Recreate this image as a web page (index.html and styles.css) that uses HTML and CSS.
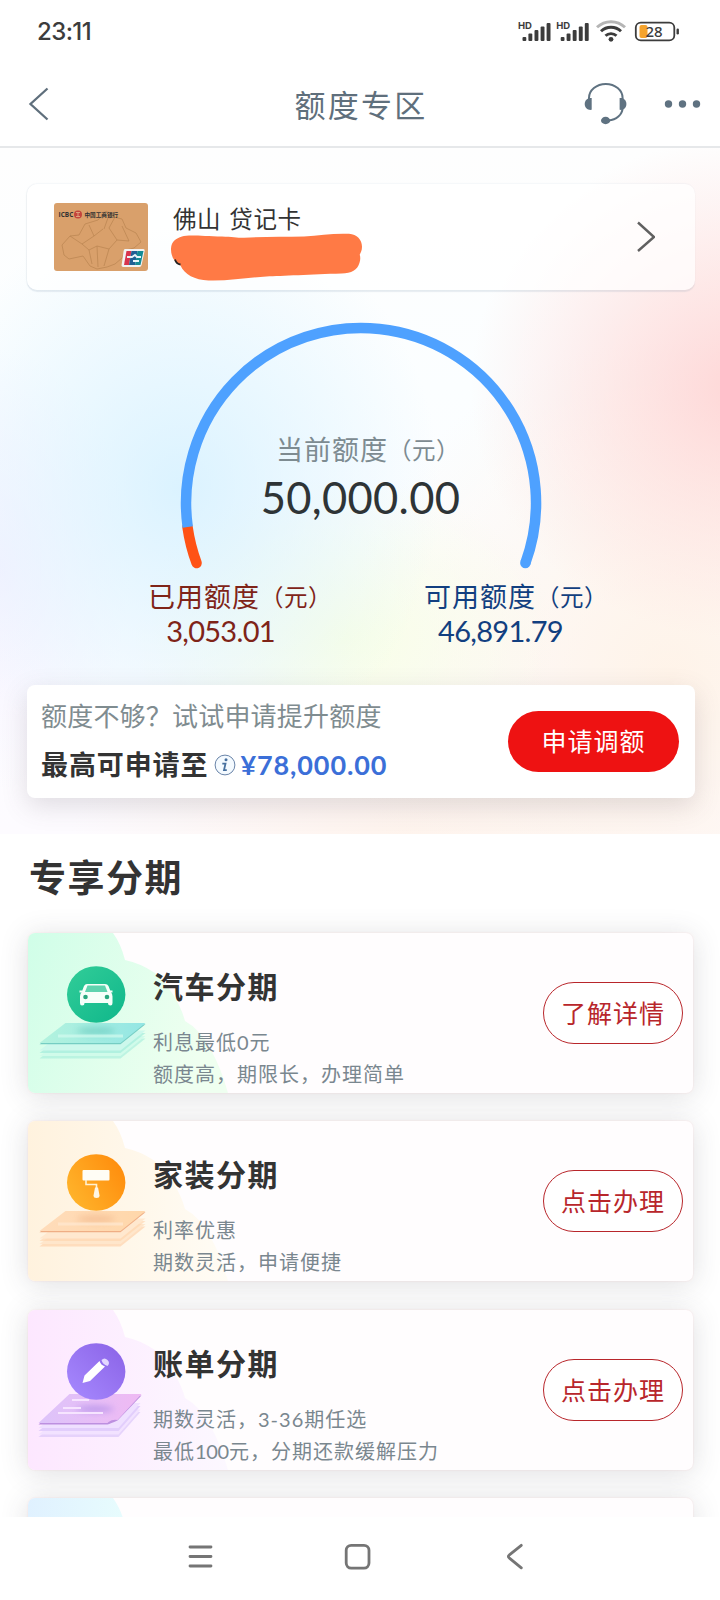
FILE: index.html
```html
<!DOCTYPE html>
<html lang="zh-CN">
<head>
<meta charset="utf-8">
<title>额度专区</title>
<link rel="stylesheet" href="styles.css">
</head>
<body>
<div class="status">
  <span class="clock">23:11</span>
  <svg class="status-icons" width="166" height="28" viewBox="516 18 166 28">
    <g fill="#3c3c3c">
      <g id="sim">
        <text class="hd" x="518" y="28.5">HD</text>
        <rect x="522.5" y="37" width="3.8" height="4" rx="1"/>
        <rect x="528.4" y="33.5" width="3.9" height="7.5" rx="1"/>
        <rect x="534.5" y="30" width="3.9" height="11" rx="1"/>
        <rect x="540.6" y="26.5" width="3.9" height="14.5" rx="1"/>
        <rect x="546.6" y="23" width="3.9" height="18" rx="1"/>
      </g>
      <use href="#sim" x="38.2"/>
      <circle cx="611" cy="39.3" r="2.4"/>
    </g>
    <g fill="none" stroke="#3c3c3c" stroke-width="2.9">
      <path d="M605.5 35.8a8 8 0 0 1 11 0"/>
      <path d="M601 31.3a14.5 14.5 0 0 1 20 0"/>
      <path d="M597 27.3a20.3 20.3 0 0 1 28 0" stroke="#b5b5b5"/>
    </g>
    <rect x="639.5" y="25" width="8" height="13" rx="2" fill="#f5a32c"/>
    <rect x="635.8" y="22.6" width="38.5" height="17.8" rx="5" fill="none" stroke="#3c3c3c" stroke-width="1.8"/>
    <rect x="676.5" y="28.5" width="2.4" height="6" rx="1.2" fill="#3c3c3c"/>
    <text class="charge" x="645.5" y="36.8">28</text>
  </svg>
</div>
<header class="topbar">
  <svg class="back" width="22" height="36" viewBox="28 86 22 36"><path d="M47.5 88.5L30.5 104l17 15.5" fill="none" stroke="#5f6f7c" stroke-width="2.3"/></svg>
  <h1 class="topbar-title">额度专区</h1>
  <svg class="actions" width="120" height="44" viewBox="582 82 120 44">
    <path d="M589 99v-1a16.8 14 0 0 1 33.600 0v10a15 13 0 0 1-14 12.500" fill="none" stroke="#5f7281" stroke-width="2"/>
    <g fill="#5f7281">
      <path d="M591.700 98v11.800c-4 .6-7-2-7-5.800s3-6.500 7-6z"/>
      <path d="M619.600 98v11.800c4 .6 6.800-2 6.800-5.800s-2.800-6.500-6.800-6z"/>
      <ellipse cx="605.600" cy="120.500" rx="4.600" ry="3.700"/>
      <circle cx="668.500" cy="104" r="3.700"/><circle cx="682.500" cy="104" r="3.700"/><circle cx="696.500" cy="104" r="3.700"/>
    </g>
  </svg>
</header>
<main class="page">
  <section class="hero">
    <div class="account">
      <svg class="bankcard" width="94" height="68" viewBox="0 0 94 68">
        <rect width="94" height="68" rx="3" fill="#d9a06b"/>
        <g fill="none" stroke="#b98450" stroke-width=".7">
          <path d="M8 42l8-9 9-1 6-11 13-4 8-9 8 6 8 2 4 9 10 5 5 9-7 6-8 2-4 8-7 6-8 3-10 2-7-3-7-10-14 3-5-4z"/>
          <path d="M16 33l12 8 12-8-5-11M28 41l7 6 8-4 12 3 8-9-8-12 6-11M40 33l9-7M55 46l-5 17M63 37l12 1M50 26l5-14M35 47l3 14M75 38l-7-15M44 64l-1-21"/>
        </g>
        <text class="bankcard-latin" x="4.500" y="14">ICBC</text>
        <circle cx="24" cy="11.500" r="4" fill="#c4443c"/><path d="M22 9.500h4M22 13.500h4M24 9.500v4" stroke="#e5b58b" stroke-width=".8"/>
        <text class="bankcard-name" x="30.500" y="13.800">中国工商银行</text>
        <path d="M71 46h18q2 0 1.600 2l-3 14q-.4 2-2.400 2h-16q-2 0-1.600-2l2-14q.4-2 1.400-2z" fill="#f2f2f2"/>
        <path d="M72.500 48h5l-2.500 14h-5z" fill="#d8344d"/><path d="M77.500 48h6l-2.500 14h-6z" fill="#1f5f94"/><path d="M83.500 48h6l-3 14h-5.500z" fill="#138a94"/>
        <path d="M73 54h5l3-2 2 2h4M79 58h6" stroke="#e8f4f8" stroke-width="1.800" fill="none"/>
      </svg>
      <div class="account-info">
        <div class="account-name">佛山 贷记卡</div>
        <svg class="redact" width="194" height="50" viewBox="170 232 194 50">
          <path d="M182 236.500c6-2 20-.5 40 0 10 .3 17 1.500 22 1.300 20-1.300 40-.8 60-1.300 16-1 30-3.500 45-2.700 8 .5 13 6 13 13 0 4-1.500 6-2.300 8 .8 2 .8 5-.2 8-2 7-8 10.700-18 10.800-30 .6-60 2.800-75 2.800-18 1-36 4.500-58 4-14-.6-24-6-28-15-6-3-9.800-9-9.500-17 .5-7 5-10 11-11.900z" fill="#ff7a45"/>
          <path d="M175 259.500q1.300 4.500 5.500 5" fill="none" stroke="#222" stroke-width="1.800"/>
        </svg>
      </div>
      <svg class="chev" width="20" height="32" viewBox="635 221 20 32"><path d="M638 222.500L654 237l-16 14" fill="none" stroke="#606060" stroke-width="2.400"/></svg>
    </div>
    <div class="gauge">
      <svg class="gauge-arc" width="372" height="256" viewBox="174.500 316 372 256">
        <g fill="none" stroke-width="10.500">
          <path d="M196.100 563a175 175 0 0 1-9.100-36" stroke="#ff5215" stroke-linecap="round"/>
          <path d="M187.200 527A175 175 0 1 1 524.900 563" stroke="#4ea1ff"/>
          <circle cx="524.900" cy="563" r="5.250" fill="#4ea1ff" stroke="none"/>
        </g>
      </svg>
      <div class="gauge-label"><span>当前额度</span><span class="unit">（元）</span></div>
      <div class="gauge-total">50,000.00</div>
    </div>
    <div class="split">
      <div class="split-item used"><div class="split-label"><span>已用额度</span><span class="unit">（元）</span></div><div class="split-value">3,053.01</div></div>
      <div class="split-item free"><div class="split-label"><span>可用额度</span><span class="unit">（元）</span></div><div class="split-value">46,891.79</div></div>
    </div>
    <div class="raise">
      <div class="raise-text">
        <div class="raise-hint">额度不够？试试申请提升额度</div>
        <div class="raise-max"><span class="raise-lead">最高可申请至</span>
          <svg width="22" height="22" viewBox="0 0 22 22"><circle cx="11" cy="11" r="9.900" fill="#f4faff" stroke="#6883a8" stroke-width="1"/><circle cx="12" cy="5.800" r="1.500" fill="#47709f"/><path d="M8.300 9.700h3.200l-1.500 6.400h2.800" fill="none" stroke="#47709f" stroke-width="1.800"/></svg>
          <span class="raise-sum">¥78,000.00</span></div>
      </div>
      <button class="raise-btn">申请调额</button>
    </div>
  </section>
  <h2 class="section-title">专享分期</h2>
  <div class="offers">
    <article class="offer">
      <svg class="offer-art" width="205" height="160" viewBox="28 933 205 160">
        <defs>
          <linearGradient id="g1" x1="0" x2="1" y1="0" y2=".3"><stop offset="0" stop-color="#d0fee8"/><stop offset="1" stop-color="#effff0"/></linearGradient>
          <linearGradient id="c1" x1="0" x2="1" y1="0" y2="1"><stop offset="0" stop-color="#32cd98"/><stop offset="1" stop-color="#0fb78b"/></linearGradient>
          <linearGradient id="p1" x1="0" x2="1"><stop offset="0" stop-color="#b4f3de"/><stop offset="1" stop-color="#93e6e4"/></linearGradient>
          <path id="tint" d="M28 933h85q8 11 12 27 15 3 30 13 23 22 30 48 15 8 26 29 10 18 17 43H28z"/>
          <path id="sheet" d="M39.500 1043l26-20h80l-25 20z"/>
          <filter id="soft" x="-.5" y="-1" width="2" height="3"><feGaussianBlur stdDeviation="3"/></filter>
        </defs>
        <use href="#tint" fill="url(#g1)"/>
        <use href="#sheet" y="15.500" fill="#a4eddb" opacity=".6"/><use href="#sheet" y="13" fill="#d0fbea"/>
        <use href="#sheet" y="10" fill="#a4eddb" opacity=".7"/><use href="#sheet" y="7.500" fill="#cdf8ec"/>
        <use href="#sheet" y="1.300" fill="#75cdc3"/><use href="#sheet" fill="url(#p1)"/>
        <ellipse cx="96" cy="1031" rx="19" ry="3.500" fill="#48b8a8" opacity=".45" filter="url(#soft)"/>
        <path d="M58 1036h65" stroke="#d4fbef" stroke-width="3" opacity=".7"/>
        <ellipse cx="96.200" cy="994.500" rx="29.200" ry="28.300" fill="url(#c1)"/>
        <path d="M87 984h18q2.500 0 3.500 2l2.300 6q1.700 1.500 1.700 4.500v6.500q0 2.500-2 2.500-2.500 0-2.500-2.500H84.500q0 2.500-2.500 2.500-2 0-2-2.500v-6.500q0-3 1.700-4.500l2.300-6q1-2 3-2z" fill="#f6fff9"/>
        <path d="M79.500 991.500h3M109.500 991.500h3" stroke="#f6fff9" stroke-width="2"/>
        <path d="M87.500 985.500h17.500l2.500 6.500H85z" fill="#5fd3ae"/><circle cx="85.500" cy="997" r="2.300" fill="#29a77e"/><circle cx="107" cy="997" r="2.300" fill="#29a77e"/>
      </svg>
      <div class="offer-body"><h3>汽车分期</h3><p>利息最低0元</p><p>额度高，期限长，办理简单</p></div>
      <button class="offer-btn">了解详情</button>
    </article>
    <article class="offer">
      <svg class="offer-art" width="205" height="160" viewBox="28 933 205 160">
        <defs>
          <linearGradient id="g2" x1="0" x2="1"><stop offset="0" stop-color="#fff2de"/><stop offset="1" stop-color="#fffcf5"/></linearGradient>
          <linearGradient id="c2" x1="1" x2="0" y1="0.200" y2=".8"><stop offset="0" stop-color="#ff8c0c"/><stop offset="1" stop-color="#ffb52c"/></linearGradient>
          <linearGradient id="p2" x1="0" x2="1"><stop offset="0" stop-color="#ffdcba"/><stop offset="1" stop-color="#ffd7aa"/></linearGradient>
        </defs>
        <use href="#tint" fill="url(#g2)"/>
        <use href="#sheet" y="15.500" fill="#ffd3ac" opacity=".7"/><use href="#sheet" y="13" fill="#ffe6cb"/>
        <use href="#sheet" y="10" fill="#ffd3ac" opacity=".6"/><use href="#sheet" y="7.500" fill="#ffe8cf"/>
        <use href="#sheet" y="1.300" fill="#efae85"/><use href="#sheet" fill="url(#p2)"/>
        <ellipse cx="96" cy="1031" rx="19" ry="3.500" fill="#eaa477" opacity=".45" filter="url(#soft)"/>
        <path d="M58 1036h65" stroke="#ffe9d2" stroke-width="3" opacity=".7"/>
        <ellipse cx="96.200" cy="994.500" rx="29.200" ry="28.300" fill="url(#c2)"/>
        <rect x="82.500" y="982" width="27" height="10.500" rx="1" fill="#fffdf5"/>
        <path d="M86 992v4.500h10.500v4" fill="none" stroke="#fff1d2" stroke-width="1.600"/><path d="M95 999.500h3l1.500 8q0 2.500-3 2.500t-3-2.500z" fill="#fff6e4"/>
      </svg>
      <div class="offer-body"><h3>家装分期</h3><p>利率优惠</p><p>期数灵活，申请便捷</p></div>
      <button class="offer-btn">点击办理</button>
    </article>
    <article class="offer">
      <svg class="offer-art" width="205" height="160" viewBox="28 933 205 160">
        <defs>
          <linearGradient id="g3" x1="0" x2="1"><stop offset="0" stop-color="#fde7ff"/><stop offset="1" stop-color="#fcf8ff"/></linearGradient>
          <linearGradient id="c3" x1="1" x2="0" y1="0" y2="1"><stop offset="0" stop-color="#8a62e6"/><stop offset="1" stop-color="#a78aff"/></linearGradient>
          <linearGradient id="p3" x1="0" x2="1"><stop offset="0" stop-color="#ddc4fa"/><stop offset="1" stop-color="#efb9f3"/></linearGradient>
        </defs>
        <use href="#tint" fill="url(#g3)"/>
        <path d="M38.500 1060l31-25h71l-22 25z" fill="#dcc8fa" opacity=".7"/><path d="M38.500 1057.500l31-25h71l-22 25z" fill="#f2e2ff"/>
        <path d="M38.500 1054l31-25h71l-22 25z" fill="#e2cefc"/><path d="M38.500 1051l31-25h71l-22 25z" fill="#efe0ff"/>
        <path d="M38.500 1047.500l31-29h72l-24 25q-7 3-10 4z" fill="#bd90e0"/><path d="M38.500 1046l31-29h72l-24 26q-5-1-9 2l-1 1z" fill="url(#p3)"/>
        <ellipse cx="95" cy="1032" rx="19" ry="3" fill="#9b7de4" opacity=".6" filter="url(#soft)"/>
        <path d="M72 1023h17M63 1031h18M58 1036h45" stroke="#f6e4ff" stroke-width="2.200"/>
        <ellipse cx="96.200" cy="994.500" rx="29.200" ry="28.300" fill="url(#c3)"/>
        <path d="M82.500 1006l2-7.500 15-14.500q1.200 4 5.500 5.500L90 1004z" fill="#fff"/><path d="M101.500 983q3-3 6 0t0 6q-5-1.500-6-6z" fill="#e3d7ff"/>
      </svg>
      <div class="offer-body"><h3>账单分期</h3><p>期数灵活，3-36期任选</p><p>最低<span class="tight">100</span>元，分期还款缓解压力</p></div>
      <button class="offer-btn">点击办理</button>
    </article>
    <article class="offer">
      <svg class="offer-art" width="205" height="160" viewBox="28 933 205 160">
        <defs><linearGradient id="g4" x1="0" x2=".6"><stop offset="0" stop-color="#e0f1ff"/><stop offset="1" stop-color="#e9fffd"/></linearGradient></defs>
        <use href="#tint" fill="url(#g4)"/>
      </svg>
    </article>
  </div>
</main>
<nav class="sysnav">
  <svg width="340" height="30" viewBox="186 1541 340 30">
    <g fill="none" stroke="#757575" stroke-width="2.800" stroke-linecap="round" stroke-linejoin="round">
      <path d="M190 1547h21M190 1556.500h21M190 1566h21"/>
      <rect x="346.200" y="1545.300" width="22.800" height="22.800" rx="5"/>
      <path d="M521.300 1545.300l-12.200 9.900q-1.500 1.300 0 2.600l12.200 10"/>
    </g>
  </svg>
</nav>
</body>
</html>
```
FILE: styles.css
```css
* { box-sizing: border-box; margin: 0; padding: 0; }

body {
  width: 720px;
  height: 1600px;
  display: flex;
  flex-direction: column;
  overflow: hidden;
  background: #fff;
  color: #333;
  font-family: Lato, "Noto Sans CJK SC", sans-serif;
  white-space: nowrap;
}

svg { display: block; flex: none; }
button { border: 0; font: inherit; }

/* System status bar */
.status {
  height: 63px;
  padding: 0 38px 0 37px;
  display: flex;
  justify-content: space-between;
  align-items: center;
}
.clock { font: 500 24px/62px Inter, sans-serif; letter-spacing: -.6px; color: #3c3c3c; }
.hd { font: 700 9.5px Inter, sans-serif; }
.charge { font: 500 15px "Noto Sans", sans-serif; fill: #3c3c3c; }

/* Page header */
.topbar {
  height: 85px;
  padding: 0 18px 2px 28px;
  display: grid;
  grid-template-columns: 120px 1fr 120px;
  align-items: center;
  border-bottom: 2px solid #e6e8ea;
}
.topbar-title {
  text-align: center;
  padding: 3px 8px 0 0;
  font-size: 31px;
  font-weight: 400;
  line-height: 40px;
  letter-spacing: 2.2px;
  color: #5f6f7c;
}

.page { height: 1369px; overflow: hidden; }

/* Credit line overview */
.hero {
  height: 686px;
  padding: 36px 25px 0 27px;
  background:
    radial-gradient(ellipse 270px 250px at 740px 240px, rgba(255, 206, 206, .8), rgba(255, 216, 214, .55) 45%, rgba(255, 235, 233, 0)),
    radial-gradient(ellipse 260px 290px at 180px 340px, rgba(208, 239, 255, .75), rgba(220, 243, 255, .5) 50%, rgba(255, 255, 255, 0)),
    radial-gradient(ellipse 210px 160px at 345px 490px, rgba(247, 255, 226, .85), rgba(250, 255, 235, 0)),
    radial-gradient(ellipse 330px 340px at 670px 530px, rgba(255, 242, 230, .9), rgba(255, 248, 244, 0)),
    radial-gradient(ellipse 130px 220px at 0 420px, rgba(242, 237, 255, .7), rgba(255, 255, 255, 0)),
    radial-gradient(ellipse 330px 130px at 400px 690px, rgba(255, 240, 229, .7), rgba(255, 255, 255, 0)),
    linear-gradient(#fefefe, #fbfeff 35%, #fdfbff);
}
.account {
  height: 106px;
  display: flex;
  align-items: center;
  padding: 0 40px 0 27px;
  border-radius: 10px;
  background: rgba(255, 255, 255, .72);
  box-shadow: 0 1.5px 1px rgba(120, 140, 170, .16), -1px 0 1px rgba(120, 140, 170, .08), 0 -1px 1px rgba(120, 140, 170, .05);
}
.bankcard-latin { font: 700 6.5px "Open Sans", sans-serif; fill: #333; }
.bankcard-name { font: 700 5.6px "Noto Sans CJK SC", sans-serif; fill: #333; }
.account-info { margin-left: 22px; padding-top: 9px; flex: 1; }
.account-name { margin: -1px 0 0 3px; font-size: 23.5px; line-height: 36px; letter-spacing: .6px; word-spacing: 1.5px; }
.redact { margin-top: -5px; }

.gauge {
  width: 372px;
  height: 256px;
  margin: 26px auto 0 147.5px;
  display: grid;
  grid-template-rows: 112px 40px 56px;
  justify-items: center;
}
.gauge-arc { grid-area: 1 / 1 / 4 / 2; }
.gauge-label {
  grid-area: 2 / 1;
  display: flex;
  padding-left: 15px;
  font-size: 27px;
  line-height: 44px;
  letter-spacing: 1px;
  color: #7d8b91;
}
.unit { font-size: 23.5px; letter-spacing: .5px; }
.gauge-total { grid-area: 3 / 1; font-size: 43.5px; line-height: 58px; letter-spacing: .3px; color: #2e3436; }

.split { display: flex; margin-top: 5px; padding-left: 121px; gap: 94px; }
.split-item { width: 182px; }
.split-label { display: flex; font-size: 27px; line-height: 40px; letter-spacing: 1px; }
.split-value { width: 145px; text-align: center; font-size: 29px; line-height: 30px; letter-spacing: -.7px; margin-top: -1px; }
.free .split-value { width: 153px; }
.used { color: #7f2418; }
.free { color: #123f80; }

.raise {
  height: 113px;
  margin-top: 39px;
  padding: 0 16px 0 14px;
  display: flex;
  justify-content: space-between;
  align-items: center;
  border-radius: 8px;
  background: #fff;
  box-shadow: 0 8px 26px rgba(90, 80, 90, .18);
}
.raise-hint { font-size: 26px; line-height: 48px; letter-spacing: .2px; color: #7f8c90; }
.raise-max { display: flex; align-items: center; line-height: 50px; margin-bottom: 2px; font-size: 27px; font-weight: 700; }
.raise-max svg { margin: 0 4px 0 6px; }
.raise-lead { letter-spacing: .9px; }
.raise-sum { color: #3b6fd8; letter-spacing: .9px; }
.raise-btn {
  width: 171px;
  height: 61px;
  padding-bottom: 4px;
  border-radius: 31px;
  background: #ee1212;
  color: #fff;
  font-size: 25px;
  letter-spacing: 1px;
}

/* Instalment offers */
.section-title { height: 99px; padding: 17px 0 0 29px; font-size: 37px; line-height: 54px; letter-spacing: 1.5px; color: #333; }
.offers { display: flex; flex-direction: column; gap: 28.4px; padding: 0 27px 0 28px; }
.offer {
  height: 160px;
  flex: none;
  display: flex;
  align-items: center;
  border-radius: 7px;
  overflow: hidden;
  background: #fffdfe;
  box-shadow: 0 3px 28px rgba(60, 60, 70, .17), 0 0 2px rgba(255, 200, 200, .4);
}
.offer-body { margin-left: -80px; flex: 1; align-self: flex-start; padding-top: 31px; }
.offer-body h3 { font-size: 30px; line-height: 44px; letter-spacing: 1.5px; margin-bottom: 18px; color: #333; }
.offer-body p { font-size: 20px; line-height: 32px; letter-spacing: 1px; color: #7a878f; }
.tight { letter-spacing: -.3px; }
.offer-btn {
  width: 140px;
  height: 62px;
  margin: 0 10px 0 0;
  padding-bottom: 2px;
  border: 1.5px solid #b8262b;
  border-radius: 31px;
  background: #fff;
  color: #b8262b;
  font-size: 25px;
  letter-spacing: 1px;
}

/* System navigation */
.sysnav { height: 83px; padding: 24px 0 0 186px; background: #fff; }
```
